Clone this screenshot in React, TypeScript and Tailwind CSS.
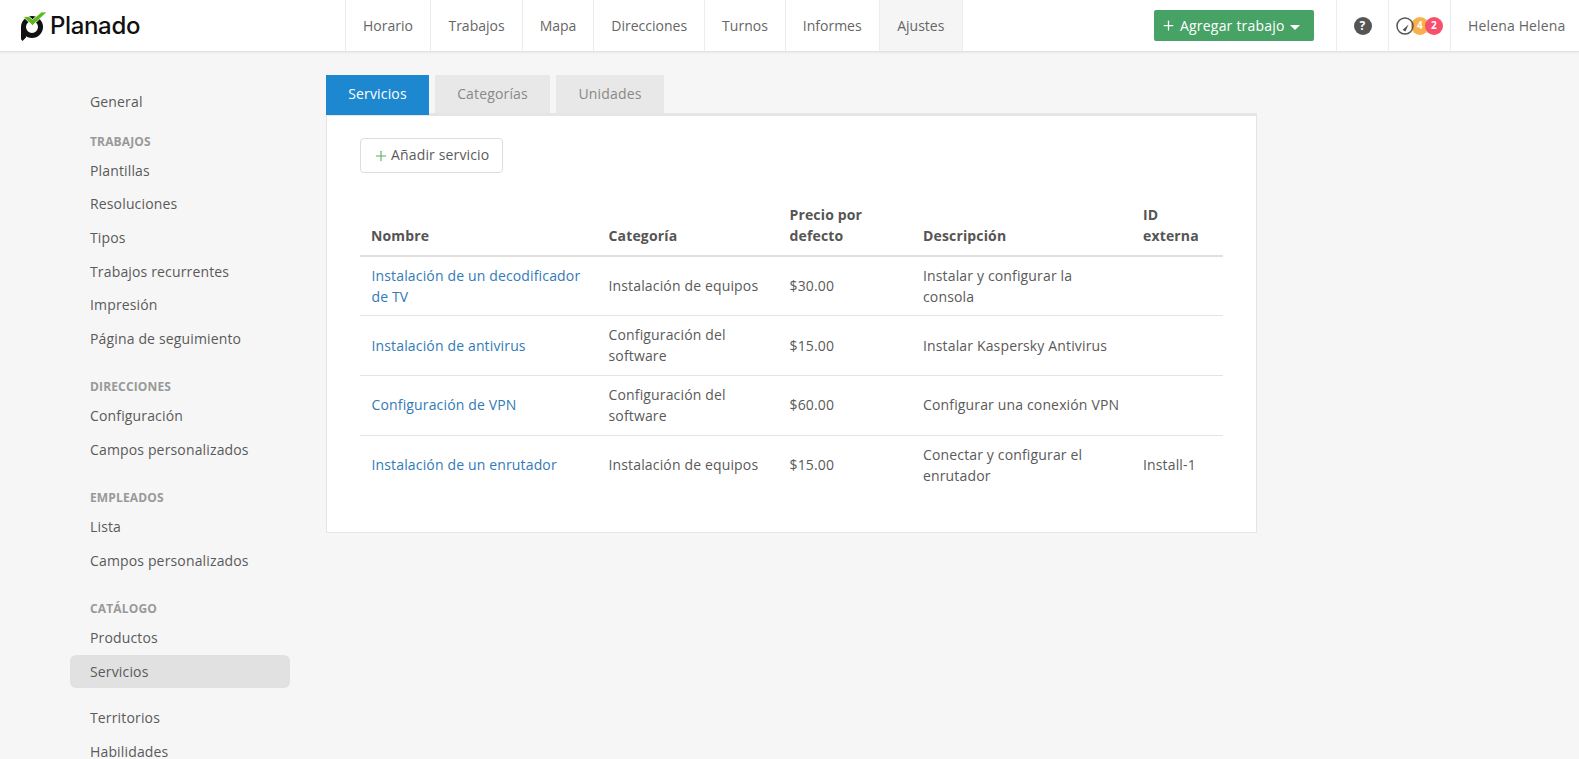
import React from 'react';
import { Plus } from 'lucide-react';

const NAV = ['Horario', 'Trabajos', 'Mapa', 'Direcciones', 'Turnos', 'Informes', 'Ajustes'];

const GROUPS: { title?: string; items: string[] }[] = [
  { items: ['General'] },
  { title: 'TRABAJOS', items: ['Plantillas', 'Resoluciones', 'Tipos', 'Trabajos recurrentes', 'Impresión', 'Página de seguimiento'] },
  { title: 'DIRECCIONES', items: ['Configuración', 'Campos personalizados'] },
  { title: 'EMPLEADOS', items: ['Lista', 'Campos personalizados'] },
  { title: 'CATÁLOGO', items: ['Productos', 'Servicios'] },
  { items: ['Territorios', 'Habilidades'] },
];

const ROWS = [
  { name: 'Instalación de un decodificador de TV', cat: 'Instalación de equipos', price: '$30.00', desc: 'Instalar y configurar la consola', ext: '' },
  { name: 'Instalación de antivirus', cat: 'Configuración del software', price: '$15.00', desc: 'Instalar Kaspersky Antivirus', ext: '' },
  { name: 'Configuración de VPN', cat: 'Configuración del software', price: '$60.00', desc: 'Configurar una conexión VPN', ext: '' },
  { name: 'Instalación de un enrutador', cat: 'Instalación de equipos', price: '$15.00', desc: 'Conectar y configurar el enrutador', ext: 'Install-1' },
];

const Logo = () => (
  <div className="flex items-center w-[345px] pl-[20px] shrink-0">
    <svg width="28" height="31" viewBox="20 11 28 31" className="shrink-0 mt-[2px]">
      <circle cx="32" cy="27" r="8.5" fill="none" stroke="#111111" strokeWidth="5" />
      <path d="M21 27 L26 27 L26 37.5 L22.5 41 C21.5 40 21 39.5 21 38.5 Z" fill="#111111" />
      <path d="M23 16.5 L29 16.5 L32.5 19.5 L41.5 12 L47 12 L32.5 25.5 Z" fill="#5cb916" stroke="#ffffff" strokeWidth="0.8" />
    </svg>
    <span className="ml-[2px] text-[24px] leading-none font-medium text-[#111] font-['Inter',sans-serif] tracking-[-0.35px]">Planado</span>
  </div>
);

const Header = () => (
  <header className="h-[52px] bg-white border-b border-[#e2e2e2] shadow-[0_1px_2px_rgba(0,0,0,0.06)] flex items-stretch shrink-0 text-[#666]">
    <Logo />
    <nav className="flex border-l border-[#ececec] tracking-normal">
      {NAV.map(n => (
        <a
          key={n}
          className={`pb-[1px] flex items-center border-r border-[#ececec] ${n === 'Ajustes' ? 'bg-[#f5f5f5] px-[17.5px]' : 'px-[17px]'} ${n === 'Horario' ? 'pr-[17.5px]' : ''}`}
        >
          {n}
        </a>
      ))}
    </nav>
    <div className="ml-auto flex items-stretch">
      <div className="flex items-center pr-[22px]">
        <button className="h-[31px] w-[160px] pl-[7px] rounded-[2px] bg-[#47a265] text-white flex items-center tracking-[0.2px]">
          <Plus size={15} strokeWidth={2} />
          <span className="ml-[4px] pb-[1px]">Agregar trabajo</span>
          <span className="ml-[5px] mt-[4px] w-0 h-0 border-x-[5px] border-x-transparent border-t-[5px] border-t-white" />
        </button>
      </div>
      <div className="w-[52px] border-l border-[#ececec] flex items-center justify-center">
        <span className="w-[18px] h-[18px] rounded-full bg-[#555] text-white text-[12px] font-bold flex items-center justify-center">?</span>
      </div>
      <div className="w-[62px] border-l border-[#ececec] flex items-center pl-[6px]">
        <svg width="20" height="20" viewBox="0 0 20 20" className="shrink-0 relative z-10">
          <circle cx="10" cy="10" r="8" fill="none" stroke="#555" strokeWidth="1.5" />
          <path d="M7.5 14 L13.5 8.5 L10.5 15.5 Z" fill="#555" />
        </svg>
        <span className="-ml-[4px] w-[18px] h-[18px] rounded-full bg-[#f7b04c] text-white text-[10px] font-bold flex items-center justify-center">4</span>
        <span className="-ml-[4px] w-[18px] h-[18px] rounded-full bg-[#f7506f] text-white text-[10px] font-bold flex items-center justify-center">2</span>
      </div>
      <div className="w-[129px] border-l border-[#ececec] flex items-center pl-[17px] pb-[1px]">Helena Helena</div>
    </div>
  </header>
);

const Sidebar = () => (
  <aside className="w-[220px] ml-[70px] shrink-0 pt-[33px]">
    {GROUPS.map((g, i) => (
      <div key={i} className={g.title ? '' : i === 0 ? '' : 'mt-[13px]'}>
        {g.title && (
          <div className={`text-[12px] font-bold text-[#999] pl-[20px] h-[23px] leading-[22px] ${i === 1 ? 'mt-[12px]' : 'mt-[20.5px]'}`}>{g.title}</div>
        )}
        {g.items.map(item => (
          <a
            key={item}
            className={`block h-[33.7px] leading-[34px] pl-[20px] rounded-[6px] text-[#5a5a5a] ${
              item === 'Servicios' ? 'bg-[#e1e1e1]' : ''
            }`}
          >
            {item}
          </a>
        ))}
      </div>
    ))}
  </aside>
);

const Tabs = () => (
  <div className="flex gap-[6px] items-start h-[40px]">
    <div className="h-[40px] w-[103px] pb-[3px] bg-[#1d88d0] text-white flex items-center justify-center">Servicios</div>
    <div className="h-[38px] w-[115px] pb-[2px] bg-[#e8e8e8] text-[#888] flex items-center justify-center">Categorías</div>
    <div className="h-[38px] w-[108px] pb-[2px] bg-[#e8e8e8] text-[#888] flex items-center justify-center">Unidades</div>
  </div>
);

const ServicesTable = () => (
  <table className="w-[863px] table-fixed mt-[31px] border-collapse">
    <colgroup>
      <col className="w-[237.5px]" />
      <col className="w-[181px]" />
      <col className="w-[133.5px]" />
      <col className="w-[220px]" />
      <col className="w-[91px]" />
    </colgroup>
    <thead>
      <tr className="border-b-2 border-[#e0e0e0] text-left text-[#555]">
        {['Nombre', 'Categoría', 'Precio por defecto', 'Descripción', 'ID externa'].map(h => (
          <th key={h} className="px-[11px] pb-[9px] align-bottom leading-[21px] font-bold">{h}</th>
        ))}
      </tr>
    </thead>
    <tbody>
      {ROWS.map((r, i) => (
        <tr key={r.name} className={i < ROWS.length - 1 ? 'border-b border-[#e4e4e4]' : ''}>
          <td className="pl-[11.5px] pr-[11px] pb-[1px] h-[59.7px] leading-[21px] text-[#337ab7]">{r.name}</td>
          <td className="px-[11px] pb-[1px] h-[59.7px] leading-[21px]">{r.cat}</td>
          <td className="px-[11px] pb-[1px] h-[59.7px] leading-[21px]">{r.price}</td>
          <td className="px-[11px] pb-[1px] h-[59.7px] leading-[21px]">{r.desc}</td>
          <td className="px-[11px] pb-[1px] h-[59.7px] leading-[21px]">{r.ext}</td>
        </tr>
      ))}
    </tbody>
  </table>
);

export default function App() {
  return (
    <div className="h-screen overflow-hidden flex flex-col bg-[#f6f6f6] text-[14px] text-[#5a5a5a] tracking-[0.15px] font-['Open_Sans',sans-serif]">
      <Header />
      <div className="flex items-start">
        <Sidebar />
        <main className="ml-[36px] pt-[23px] w-[931px]">
          <Tabs />
          <section className="-mt-[2px] h-[420px] bg-white border-t-[3px] border-t-[#e5e5e5] border-x border-b border-x-[#e5e5e5] border-b-[#e5e5e5] pl-[33px] pt-[22px]">
            <button className="h-[35px] w-[143px] rounded-[4px] border border-[#ddd] bg-white flex items-center pl-[12px] gap-[2px] pb-[2px] text-[#5a5a5a]">
              <Plus size={16} strokeWidth={1.6} className="text-[#55b05a] mt-[2px]" />
              <span>Añadir servicio</span>
            </button>
            <ServicesTable />
          </section>
        </main>
      </div>
    </div>
  );
}
